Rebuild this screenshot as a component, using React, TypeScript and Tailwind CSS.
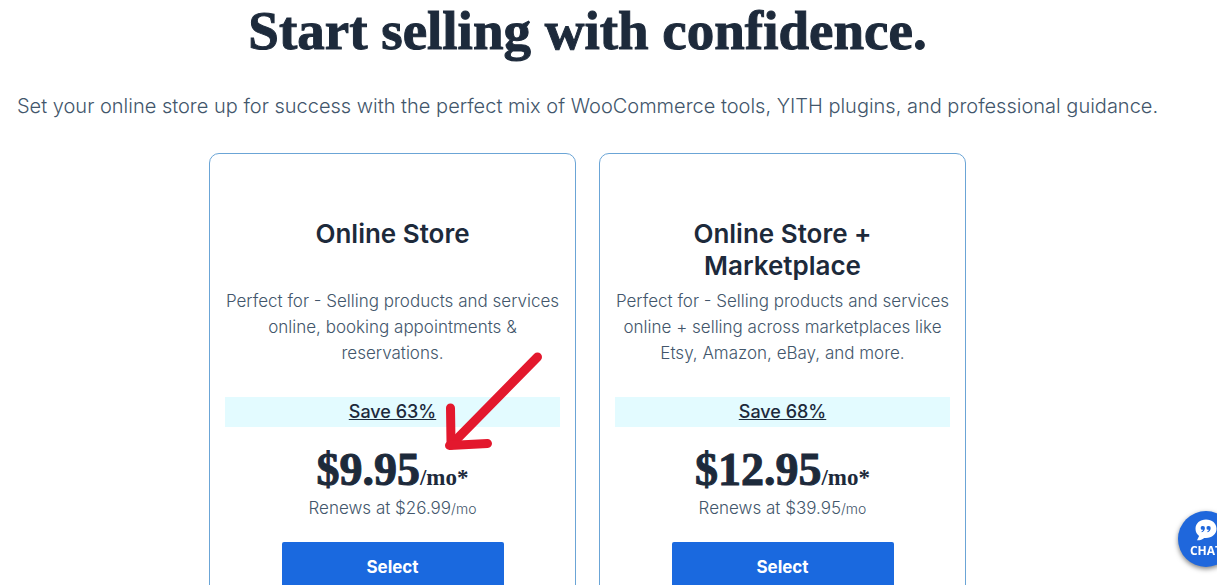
type Plan = {
  name: string;
  lines: string[];
  save: string;
  price: string;
  renews: string;
  highlighted?: boolean;
};

const plans: Plan[] = [
  {
    name: "Online Store",
    lines: ["Perfect for - Selling products and services", "online, booking appointments &", "reservations."],
    save: "Save 63%",
    price: "$9.95",
    renews: "Renews at $26.99",
    highlighted: true,
  },
  {
    name: "Online Store + Marketplace",
    lines: ["Perfect for - Selling products and services", "online + selling across marketplaces like", "Etsy, Amazon, eBay, and more."],
    save: "Save 68%",
    price: "$12.95",
    renews: "Renews at $39.95",
  },
];

function Arrow() {
  return (
    <svg
      className="pointer-events-none absolute left-[230px] top-[194px]"
      width="110"
      height="110"
      viewBox="0 0 110 110"
      fill="none"
      stroke="#e3182d"
      strokeWidth="9"
      strokeLinecap="round"
      strokeLinejoin="round"
      aria-hidden="true"
    >
      <path d="M97.500 9 L11 97" />
      <path d="M10.500 60 L11 94" />
      <path d="M9.500 97.500 L47.500 95.500" />
    </svg>
  );
}

function PlanCard({ plan }: { plan: Plan }) {
  return (
    <article className="relative flex w-[367px] flex-col rounded-[10px] border border-[#6ba5d6] px-[15px] pt-16 pb-8 text-center">
      <h2 className="mx-auto h-16 max-w-[220px] text-[26px] leading-8 font-semibold text-[#1d2a3b]">{plan.name}</h2>
      <p className="mt-[6px] h-[78px] text-[17px] leading-[26px] font-light whitespace-nowrap text-[#42566b]">
        {plan.lines.map((line) => (
          <span key={line} className="block">
            {line}
          </span>
        ))}
      </p>
      <p className="mt-[31px] h-[30px] bg-[#e3fbff] text-[18px] leading-[30px] font-medium text-[#1d2a3b] underline">
        {plan.save}
      </p>
      <p className="mt-[18px] h-[50px] font-['Liberation_Serif',serif] text-[46px] leading-[50px] font-bold text-[#1d2a3b] [-webkit-text-stroke:1px]">
        {plan.price}
        <span className="text-[23px] [-webkit-text-stroke:0px]">/mo*</span>
      </p>
      <p className="h-[26px] text-[17px] leading-[26px] font-light text-[#42566b]">
        {plan.renews}
        <span className="text-[14px]">/mo</span>
      </p>
      <button
        type="button"
        className="mx-auto mt-[21px] h-[52px] w-[222px] rounded-[2px] bg-[#1a69df] text-[17px] font-bold text-white"
      >
        Select
      </button>
      {plan.highlighted && <Arrow />}
    </article>
  );
}

function ChatButton() {
  return (
    <button
      type="button"
      className="fixed -right-[17px] bottom-[18px] flex size-14 flex-col items-center rounded-full bg-[#1f67dc] pt-2 font-['Open_Sans',sans-serif] text-[12px] leading-4 font-bold text-white shadow-[0_2px_5px_rgba(0,0,0,0.5)]"
    >
      <svg width="22" height="24" viewBox="0 0 22 24" aria-hidden="true">
        <path d="M11 0.5C5 0.5 0.5 4.4 0.5 9.7c0 3 1.400 5.600 3.600 7.300L2 21.200c3 .1 5.300-.7 7.200-2.300h1.800c6 0 10.500-3.900 10.500-9.200S17 .5 11 .5z" fill="#fff" />
        <path
          d="M7.900 7a2 2 0 0 1 2 2.100c0 2.200-1.200 3.700-3.300 4.200v-1c.9-.3 1.400-.9 1.500-1.600A1.900 1.900 0 1 1 7.900 7zm5.800 0a2 2 0 0 1 2 2.100c0 2.200-1.200 3.700-3.300 4.200v-1c.9-.3 1.400-.9 1.500-1.600A1.900 1.900 0 1 1 13.700 7z"
          fill="#1f67dc"
        />
      </svg>
      CHAT
    </button>
  );
}

export default function App() {
  return (
    <div className="h-screen overflow-hidden bg-white font-[Inter,sans-serif]">
      <main className="flex flex-col items-center pr-[42px]">
        <h1 className="font-['Liberation_Serif',serif] text-[55px] leading-[62px] font-bold whitespace-nowrap text-[#1d2a3b] [-webkit-text-stroke:1px]">
          Start selling with confidence.
        </h1>
        <p className="mt-[29px] text-[20px] leading-[30px] font-light whitespace-nowrap text-[#42566b]">
          Set your online store up for success with the perfect mix of WooCommerce tools, YITH plugins, and professional
          guidance.
        </p>
        <section className="mt-8 flex gap-[23px]" aria-label="Plans">
          {plans.map((plan) => (
            <PlanCard key={plan.name} plan={plan} />
          ))}
        </section>
      </main>
      <ChatButton />
    </div>
  );
}
